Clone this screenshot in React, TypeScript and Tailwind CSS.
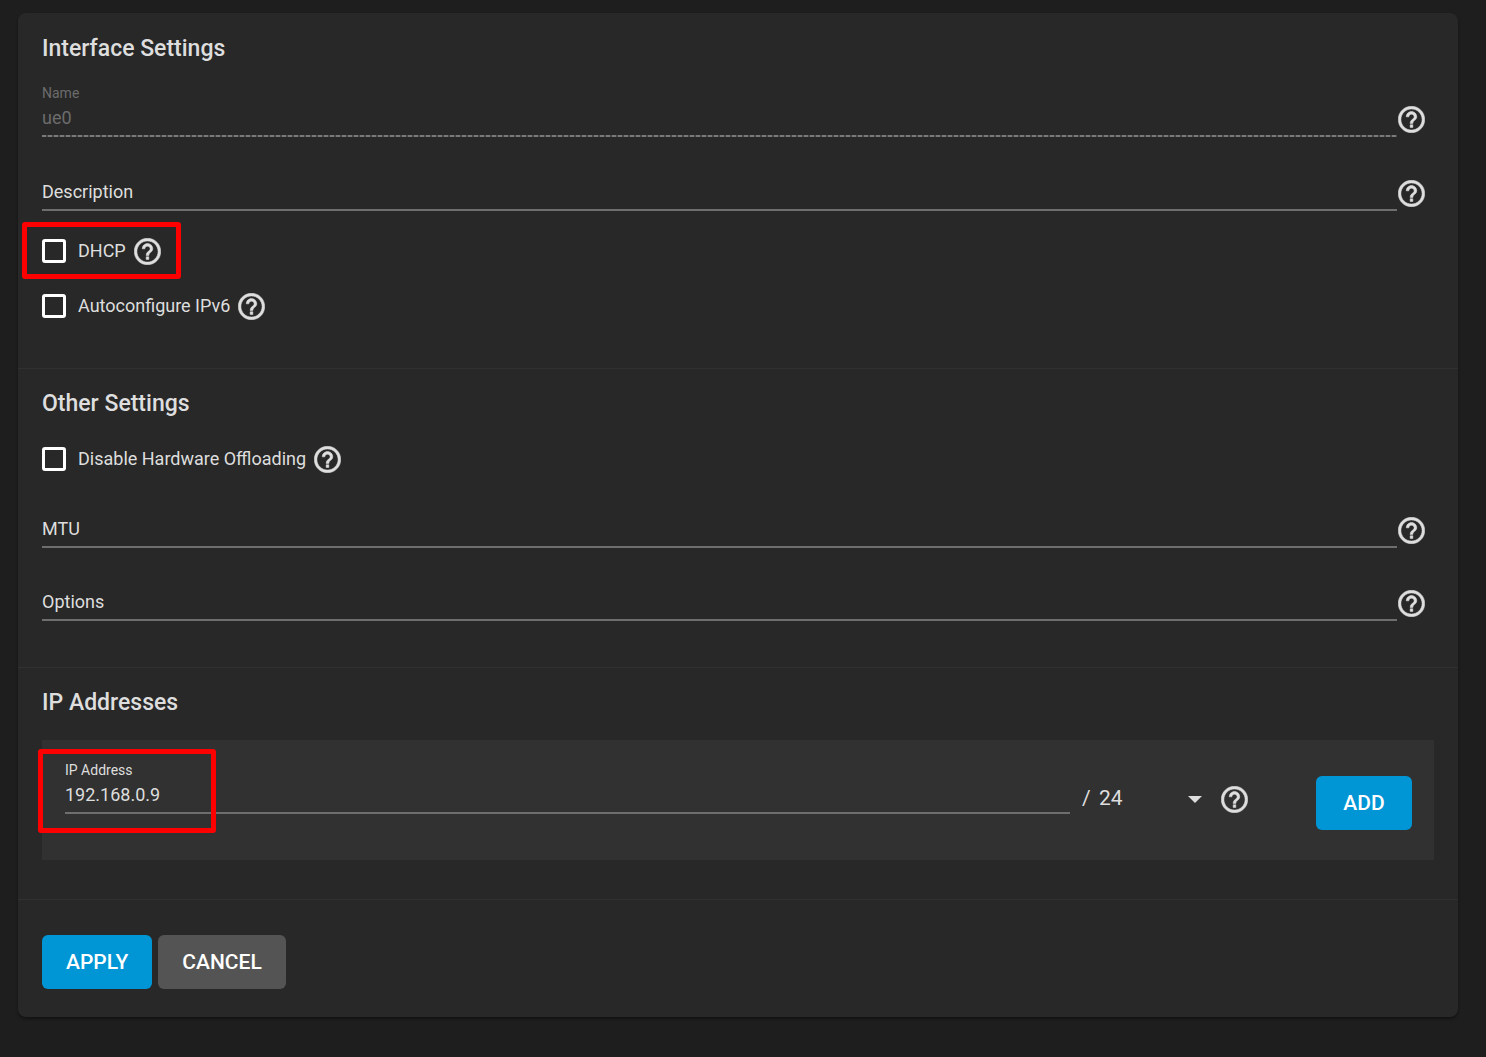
import { useState } from 'react'

type FieldProps = {
  id: string
  label: string
  value?: string
  disabled?: boolean
  float?: boolean
}

function HelpIcon() {
  return (
    <svg
      viewBox="1.8 1.8 20.4 20.4"
      strokeWidth="0.4"
      className="size-[27px] shrink-0 fill-[#dedede] stroke-[#dedede]"
      aria-hidden="true"
    >
      <path d="M11 18h2v-2h-2v2zm1-16C6.48 2 2 6.48 2 12s4.48 10 10 10 10-4.48 10-10S17.52 2 12 2zm0 18c-4.41 0-8-3.59-8-8s3.59-8 8-8 8 3.59 8 8-3.59 8-8 8zm0-14c-2.21 0-4 1.79-4 4h2c0-1.1.9-2 2-2s2 .9 2 2c0 2-3 1.75-3 5h2c0-2.25 3-2.5 3-5 0-2.21-1.79-4-4-4z" />
    </svg>
  )
}

function Field({ id, label, value = '', disabled, float }: FieldProps) {
  const [text, setText] = useState(value)
  const floating = float || text !== ''

  return (
    <div className={`relative flex-1 pt-5 ${disabled ? 'text-[#6c6c6c]' : 'text-[#dedede]'}`}>
      <label
        htmlFor={id}
        className={
          floating
            ? 'absolute left-0 top-0 text-sm leading-5'
            : 'pointer-events-none absolute left-0 top-5 text-lg leading-[30px]'
        }
      >
        {label}
      </label>
      <input
        id={id}
        type="text"
        value={text}
        disabled={disabled}
        onChange={(e) => setText(e.target.value)}
        className="block h-8 w-full bg-transparent pb-[3px] text-lg outline-none"
      />
      {disabled ? (
        <div className="h-[2px] bg-[repeating-linear-gradient(to_right,#7a7a7a_0_4px,#484848_4px_6px)]" />
      ) : (
        <div className="h-[2px] bg-[#6e6e6e]" />
      )}
    </div>
  )
}

function FieldRow(props: FieldProps) {
  return (
    <div className="flex items-end gap-px pr-[9px]">
      <Field {...props} />
      <span className="mb-1">
        <HelpIcon />
      </span>
    </div>
  )
}

function CheckRow({ id, label, marked }: { id: string; label: string; marked?: boolean }) {
  return (
    <div className="relative flex h-[54px] w-fit items-center">
      <input
        id={id}
        type="checkbox"
        className="size-6 appearance-none rounded-[3px] border-3 border-white checked:bg-[#0095d5]"
      />
      <label htmlFor={id} className="pl-3 pr-2 text-lg">
        {label}
      </label>
      <HelpIcon />
      {marked && (
        <div className="pointer-events-none absolute -bottom-px -left-5 -right-5 -top-[2px] rounded-[3px] border-5 border-[#ff0000]" />
      )}
    </div>
  )
}

function Section({ title, children }: { title: string; children: React.ReactNode }) {
  return (
    <section className="border-t border-[#303030] px-6 pt-[18px] first:border-transparent">
      <h2 className="text-[23px] font-medium leading-[34px]">{title}</h2>
      {children}
    </section>
  )
}

const button = 'h-[54px] min-w-24 rounded-md px-6 pt-[2px] text-[21px] font-medium text-white'

export default function App() {
  return (
    <main className="min-h-screen bg-[#1e1e1e] pb-10 pl-[18px] pr-7 pt-[13px] font-['Roboto',sans-serif] text-[#dedede]">
      <form
        className="rounded-lg bg-[#282828] shadow-[0_2px_3px_rgba(0,0,0,0.4)]"
        onSubmit={(e) => e.preventDefault()}
      >
        <Section title="Interface Settings">
          <div className="flex flex-col gap-5 pt-[17px]">
            <FieldRow id="name" label="Name" value="ue0" disabled />
            <FieldRow id="description" label="Description" />
          </div>
          <div className="flex flex-col gap-px pb-[35px] pt-[13px]">
            <CheckRow id="dhcp" label="DHCP" marked />
            <CheckRow id="ipv6" label="Autoconfigure IPv6" />
          </div>
        </Section>

        <Section title="Other Settings">
          <div className="pt-[11px]">
            <CheckRow id="offloading" label="Disable Hardware Offloading" />
          </div>
          <div className="flex flex-col gap-[19px] pb-[46px] pt-2">
            <FieldRow id="mtu" label="MTU" />
            <FieldRow id="options" label="Options" />
          </div>
        </Section>

        <Section title="IP Addresses">
          <div className="relative mb-[39px] mt-5 flex items-start bg-[#313131] pb-[30px] pl-[23px] pr-[22px] pt-5">
            <div className="flex flex-1 items-end">
              <Field id="address" label="IP Address" value="192.168.0.9" float />
              <div className="flex h-[30px] items-center pl-3">
                <span className="w-[17px] text-[21px]">/</span>
                <div className="relative flex items-center">
                  <select
                    aria-label="Netmask"
                    defaultValue="24"
                    className="w-[107px] appearance-none bg-transparent text-[21px] outline-none"
                  >
                    <option>8</option>
                    <option>16</option>
                    <option>24</option>
                    <option>32</option>
                  </select>
                  <svg viewBox="0 0 14 7" className="pointer-events-none absolute right-1 h-[7px] w-[14px] fill-[#dedede]">
                    <path d="M0 0h14L7 7z" />
                  </svg>
                </div>
                <span className="pl-[15px]">
                  <HelpIcon />
                </span>
              </div>
            </div>
            <button type="button" className={`${button} ml-[68px] mt-4 bg-[#0095d5]`}>
              ADD
            </button>
            <div className="pointer-events-none absolute -left-1 top-[9px] h-[84px] w-[178px] rounded-[3px] border-5 border-[#ff0000]" />
          </div>
        </Section>

        <div className="flex gap-[6px] border-t border-[#303030] px-6 pb-7 pt-[35px]">
          <button type="submit" className={`${button} bg-[#0095d5]`}>
            APPLY
          </button>
          <button type="button" className={`${button} bg-[#545454]`}>
            CANCEL
          </button>
        </div>
      </form>
    </main>
  )
}
